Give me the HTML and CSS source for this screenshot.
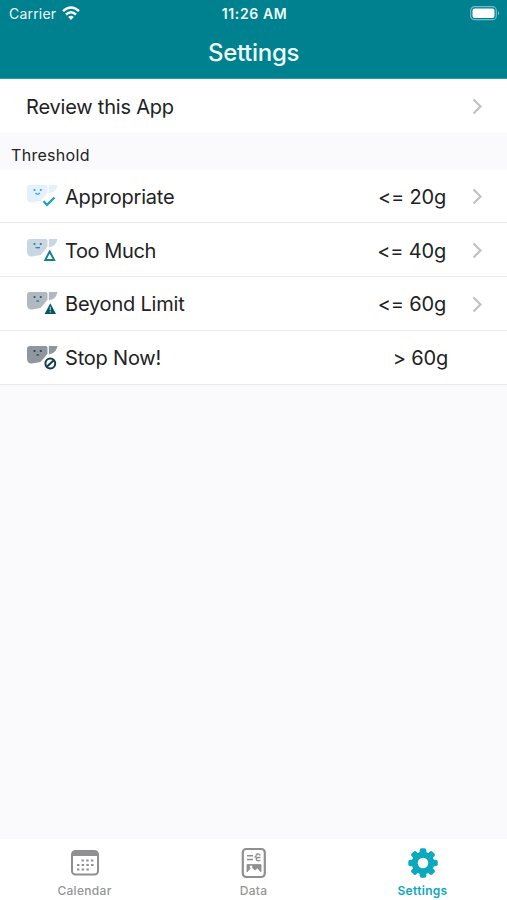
FILE: index.html
```html
<!DOCTYPE html>
<html lang="en">
<head>
<meta charset="utf-8">
<title>Settings</title>
<link rel="stylesheet" href="styles.css">
</head>
<body>
<svg class="defs" width="0" height="0">
  <defs>
    <path id="lobe-left" d="M4 1H20.500L21.500 2.500V8.500L18.500 12.500L14.500 17L6 18.500Q1.500 18.800 1 14V4Q1 1 4 1Z"/>
    <path id="lobe-right" d="M22.800 1H31.500Q30.500 6 27 8L22.800 9.500Z"/>
    <g id="face"><circle cx="8.500" cy="6" r="1.100"/><circle cx="14.800" cy="6" r="1.100"/></g>
    <path id="chevron" d="M1.500 1.500L8.500 8.500L1.500 15.500"/>
  </defs>
</svg>
<div class="app">
  <header class="header">
    <div class="status">
      <div class="status-left"><span class="carrier">Carrier</span>
        <svg class="wifi" width="18" height="15" viewBox="0 0 18 15" fill="none" stroke="#fff" stroke-width="2.500"><path d="M1 5.200Q9-2.300 17 5.200"/><path d="M4 8.500Q9 4 14 8.500"/><path d="M6.200 11Q9 8.500 11.800 11L9 14Z" fill="#fff" stroke="none"/></svg>
      </div>
      <span class="clock">11:26 AM</span>
      <svg class="battery" width="31" height="15" viewBox="0 0 31 15"><rect x=".7" y=".7" width="25.600" height="13" rx="3.800" fill="none" stroke="#73bdc5" stroke-width="1.200"/><rect x="2.500" y="2.500" width="22" height="9.500" rx="2" fill="#fff"/><path d="M28 5Q30.500 7 28 9.500Z" fill="#73bdc5"/></svg>
    </div>
    <h1 class="title">Settings</h1>
  </header>
  <main class="main">
    <div class="row"><span class="label">Review this App</span><svg class="chevron" width="10" height="17"><use href="#chevron"/></svg></div>
    <h2 class="section">Threshold</h2>
    <div class="list">
      <div class="row">
        <svg class="liver" width="34" height="26" viewBox="0 0 34 26"><g fill="#e3f1fc"><use href="#lobe-left"/><use href="#lobe-right"/></g><g fill="#36a5ca"><use href="#face"/></g><path d="M9.500 9Q11.700 11.500 14 9" fill="none" stroke="#36a5ca" stroke-width="1.200"/><path d="M17.500 17.300L21 20.800L28.500 13.500" fill="none" stroke="#1d9fbd" stroke-width="2.300"/></svg>
        <span class="label">Appropriate</span><span class="value">&lt;= 20g</span><svg class="chevron" width="10" height="17"><use href="#chevron"/></svg>
      </div>
      <div class="row">
        <svg class="liver" width="34" height="26" viewBox="0 0 34 26"><g fill="#c8d7e1"><use href="#lobe-left"/><use href="#lobe-right"/></g><g fill="#267c91"><use href="#face"/></g><path d="M9.500 9.700H14" stroke="#267c91" stroke-width="1.200"/><path d="M23.700 14L28 21.500H19.400Z" fill="#fff" stroke="#fff" stroke-width="4"/><path d="M23.700 13.500L28.200 22H19.200Z" fill="#fff" stroke="#147f93" stroke-width="1.900"/></svg>
        <span class="label too-much">Too Much</span><span class="value">&lt;= 40g</span><svg class="chevron" width="10" height="17"><use href="#chevron"/></svg>
      </div>
      <div class="row">
        <svg class="liver" width="34" height="26" viewBox="0 0 34 26"><g fill="#b0b8c0"><use href="#lobe-left"/><use href="#lobe-right"/></g><g fill="#245b68"><use href="#face"/></g><path d="M10 10.500Q11.700 8 13.500 10.500Z" fill="#245b68"/><path d="M24.300 12.500L29.800 22.800H18.800Z" fill="#fff" stroke="#fff" stroke-width="2"/><path d="M24.300 12.300L30 23H18.600Z" fill="#075564"/><path d="M24.300 15.800V19.300M24.300 20.300V21.600" stroke="#b9d7dc" stroke-width="1.100"/></svg>
        <span class="label">Beyond Limit</span><span class="value">&lt;= 60g</span><svg class="chevron" width="10" height="17"><use href="#chevron"/></svg>
      </div>
      <div class="row">
        <svg class="liver" width="34" height="26" viewBox="0 0 34 26"><g fill="#8e969e"><use href="#lobe-left"/><use href="#lobe-right"/></g><g fill="#223f4b"><use href="#face"/></g><path d="M10 10.500Q11.700 7.500 13.500 10.500Z" fill="#223f4b"/><circle cx="24.300" cy="18.500" r="6.700" fill="#fff"/><circle cx="24.300" cy="18.500" r="4.900" fill="none" stroke="#123e48" stroke-width="2"/><path d="M20.800 21.800L27.800 15.200" stroke="#123e48" stroke-width="2"/></svg>
        <span class="label">Stop Now!</span><span class="value last">&gt; 60g</span>
      </div>
    </div>
  </main>
  <nav class="tabs">
    <div class="tab">
      <svg width="32" height="32" viewBox="0 0 32 32"><rect x="3" y="4" width="26" height="23.500" rx="3.500" fill="#fff" stroke="#8f8f91" stroke-width="2"/><path d="M3 9V7Q3 4 6 4H26Q29 4 29 7V9Z" fill="#8f8f91"/><g fill="none" stroke="#8f8f91" stroke-width="2.200" stroke-dasharray="2.400 2.300"><path d="M12.500 13.500H24.500M8 18H24.500M8 22.500H20"/></g></svg>
      <span>Calendar</span>
    </div>
    <div class="tab">
      <svg width="32" height="32" viewBox="0 0 32 32" fill="none" stroke="#8f8f91"><rect x="4.800" y="2" width="22" height="28" rx="3.500" stroke-width="2.200"/><path d="M9 8.800H15M9 12.500H15" stroke-width="1.500"/><path d="M22.300 8.500Q21.500 6.500 19.500 7Q17.500 7.500 18.300 9.800M16.500 10H18.500M22.500 10.500H20.500Q18 10.700 18.300 12.500Q18.700 14.200 22.500 13.300" stroke-width="1.300"/><path d="M9 17.500H23V25L19.500 21L17 23L13.500 20L9 25Z" fill="#8f8f91" stroke-width=".8"/><circle cx="13" cy="19.800" r="1.400" fill="#fff" stroke="none"/></svg>
      <span>Data</span>
    </div>
    <div class="tab active">
      <svg width="32" height="32" viewBox="0 0 32 32"><g fill="#0aa9bd"><circle cx="16" cy="16" r="11.300"/><g id="teeth"><rect x="12.700" y="1.300" width="6.600" height="29.400" rx="2"/><rect x="12.700" y="1.300" width="6.600" height="29.400" rx="2" transform="rotate(90 16 16)"/></g><use href="#teeth" transform="rotate(45 16 16)"/></g><circle cx="16" cy="16" r="5.300" fill="#fff"/></svg>
      <span>Settings</span>
    </div>
  </nav>
</div>
</body>
</html>
```
FILE: styles.css
```css
* { box-sizing: border-box; }
body { margin: 0; font-family: Inter, "Liberation Sans", sans-serif; color: #222224; }
.defs { position: absolute; }
.app { width: 507px; height: 900px; display: flex; flex-direction: column; background: #fafafc; }
.header { height: 79px; flex: none; background: #00818f; color: #effbfb; border-bottom: 1px solid #2998a3; }
.status { height: 27px; display: grid; grid-template-columns: 1fr auto 1fr; align-items: center; padding: 0 7px 0 9px; }
.status-left { display: flex; align-items: center; gap: 6px; }
.carrier { font-size: 14px; letter-spacing: .2px; }
.wifi { display: block; }
.clock { font-size: 14px; font-weight: 600; letter-spacing: .6px; }
.battery { justify-self: end; margin-right: -1px; }
.title { margin: 0; height: 51px; line-height: 51px; text-align: center; font-size: 24px; font-weight: 500; letter-spacing: -.3px; }
.main { flex: 1; }
.row { height: 53.8px; display: flex; align-items: center; padding: 2px 25px 0 26px; background: #fff; border-bottom: 1px solid #e9e9ec; font-size: 20px; }
.main > .row { height: 54px; border-bottom-color: #fdfdfd; }
.label { flex: 1; white-space: nowrap; letter-spacing: -.2px; }
.too-much { letter-spacing: -.4px; }
.liver { flex: none; width: 34px; margin-right: 5px; }
.value { white-space: nowrap; letter-spacing: -.2px; }
.last { margin-right: 34px; }
.chevron { flex: none; margin-left: 26px; fill: none; stroke: #c1c1c4; stroke-width: 2.2; }
.section { height: 36.5px; margin: 0; padding: 0 11px; line-height: 44px; font-size: 16px; font-weight: 400; letter-spacing: .3px; }
.tabs { flex: none; height: 61px; padding-top: 8px; display: grid; grid-template-columns: repeat(3, 1fr); background: #fff; color: #959598; font-size: 12px; font-weight: 500; }
.tab { display: flex; flex-direction: column; align-items: center; line-height: 15px; }
.tab svg { display: block; margin-bottom: 4px; }
.tab span { letter-spacing: .3px; }
.active { color: #0aa9bd; font-weight: 600; }
```
